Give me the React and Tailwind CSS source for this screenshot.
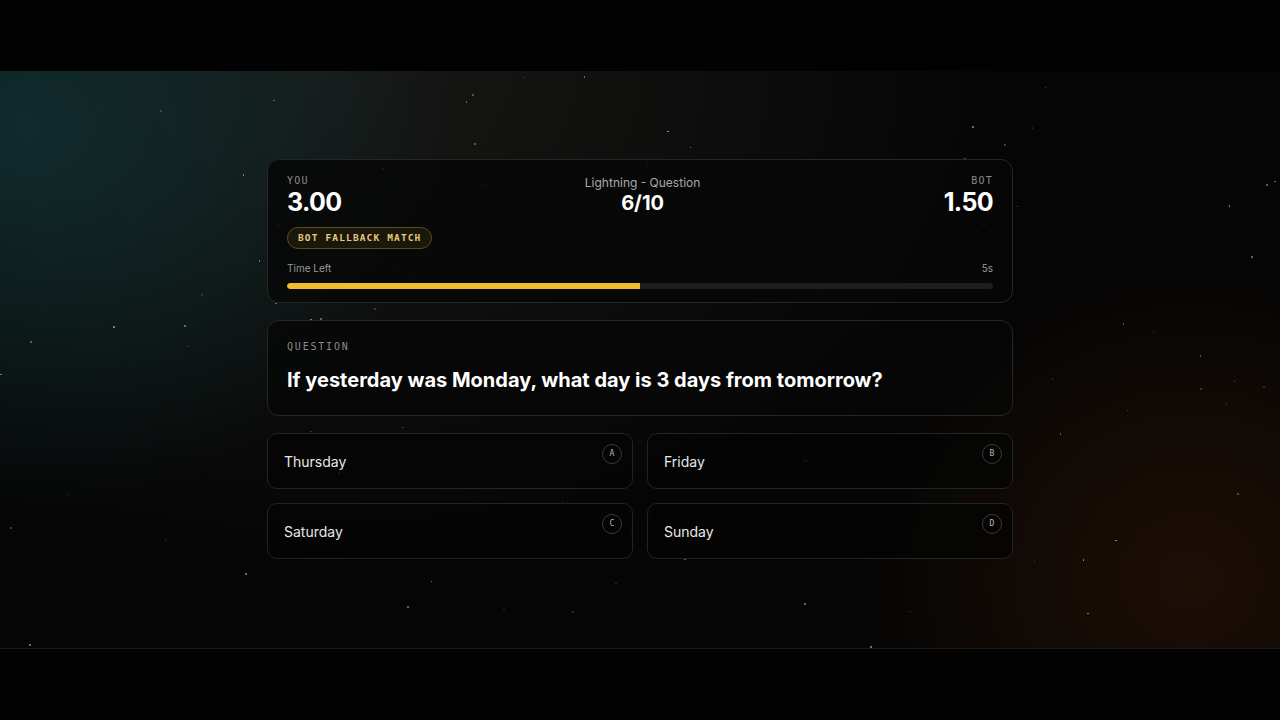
import React from "react";

function seeded(seed) {
  let s = seed;
  return () => {
    s = (s * 16807) % 2147483647;
    return (s - 1) / 2147483646;
  };
}

const rand = seeded(42);
const stars = Array.from({ length: 110 }, () => ({
  x: rand() * 100,
  y: rand() * 100,
  o: 0.15 + rand() * 0.45,
  s: rand() > 0.85 ? 2 : 1.5,
}));

const options = [
  { label: "Thursday", key: "A" },
  { label: "Friday", key: "B" },
  { label: "Saturday", key: "C" },
  { label: "Sunday", key: "D" },
];

const mono = "font-['DejaVu_Sans_Mono','Liberation_Mono',monospace]";

export default function App() {
  return (
    <div className="w-[1280px] h-[720px] bg-black flex flex-col overflow-hidden font-['Inter','Noto_Sans',sans-serif] text-white">
      <div className="h-[71px] bg-[#020202]" />
      <div className="relative flex-1 overflow-hidden bg-[#050505] bg-[radial-gradient(ellipse_420px_380px_at_2%_10%,rgba(16,62,64,0.6),transparent),radial-gradient(ellipse_700px_500px_at_25%_0%,rgba(32,32,30,0.7),transparent),radial-gradient(ellipse_340px_320px_at_93%_88%,rgba(66,30,8,0.4),transparent)] border-b border-[#1a1a1a]">
        {stars.map((st, i) => (
          <span
            key={i}
            className="absolute rounded-full bg-white"
            style={{ left: `${st.x}%`, top: `${st.y}%`, width: st.s, height: st.s, opacity: st.o }}
          />
        ))}

        <div className="relative w-[746px] mx-auto mt-[88px] flex flex-col gap-[17px]">
          {/* score card */}
          <div className="rounded-[12px] border border-[#262626] bg-[#070707]/85 px-[19px] pt-[15px] pb-[13px]">
            <div className="flex justify-between items-start">
              <div>
                <div className={`${mono} text-[10px] tracking-[0.12em] text-[#8a8a8a] leading-[12px]`}>YOU</div>
                <div className="text-[25px] font-bold leading-[30px] tracking-tight">3.00</div>
              </div>
              <div className="flex flex-col items-center">
                <div className="text-[12px] text-[#a8a8a8] leading-[15px]">Lightning - Question</div>
                <div className="text-[20px] font-bold leading-[27px]">6/10</div>
              </div>
              <div className="flex flex-col items-end">
                <div className={`${mono} text-[10px] tracking-[0.12em] text-[#8a8a8a] leading-[12px]`}>BOT</div>
                <div className="text-[25px] font-bold leading-[30px] tracking-tight">1.50</div>
              </div>
            </div>
            <div className="mt-[10px] inline-flex items-center h-[22px] px-[10px] rounded-full border border-[#5a4a22] bg-[#1c170b]">
              <span className={`${mono} text-[9.5px] font-bold tracking-[0.12em] text-[#e2cb7e]`}>BOT FALLBACK MATCH</span>
            </div>
            <div className="mt-[13px] flex justify-between text-[10px] text-[#9a9a9a] leading-[12px]">
              <span>Time Left</span>
              <span>5s</span>
            </div>
            <div className="mt-[9px] h-[6px] rounded-full bg-[#1e1e1e] overflow-hidden">
              <div className="h-full w-1/2 bg-[#f0bd2c] rounded-l-full" />
            </div>
          </div>

          {/* question card */}
          <div className="rounded-[12px] border border-[#262626] bg-[#070707]/85 px-[19px] pt-[20px] pb-[22px]">
            <div className={`${mono} text-[10px] tracking-[0.18em] text-[#8a8a8a] leading-[12px]`}>QUESTION</div>
            <div className="mt-[14px] text-[20px] font-bold leading-[26px]">
              If yesterday was Monday, what day is 3 days from tomorrow?
            </div>
          </div>

          {/* options */}
          <div className="grid grid-cols-2 gap-x-[14px] gap-y-[14px]">
            {options.map((o) => (
              <div
                key={o.key}
                className="relative h-[56px] rounded-[10px] border border-[#232323] bg-[#050505]/85 flex items-center px-[16px]"
              >
                <span className="text-[14px] text-[#e8e8e8]">{o.label}</span>
                <span
                  className={`absolute top-[10px] right-[10px] w-[20px] h-[20px] rounded-full border border-[#3a3a3a] flex items-center justify-center ${mono} text-[8px] text-[#b8b8b8]`}
                >
                  {o.key}
                </span>
              </div>
            ))}
          </div>
        </div>
      </div>
      <div className="h-[71px] bg-[#020202]" />
    </div>
  );
}
